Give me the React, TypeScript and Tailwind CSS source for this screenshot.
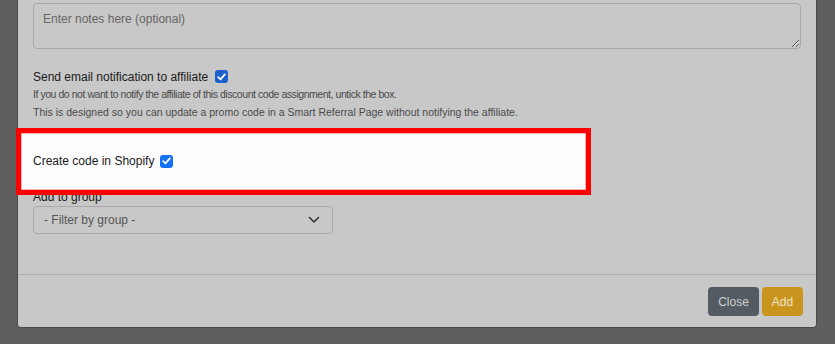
import React from "react";

const Check: React.FC<{ bright?: boolean }> = ({ bright }) => (
	<span
		className={
			"inline-flex items-center justify-center w-[13px] h-[13px] rounded-[3px] " +
			(bright ? "bg-[#1572f2]" : "bg-[#1d5fcb]")
		}
	>
		<svg width="9" height="8" viewBox="0 0 9 8" fill="none">
			<path d="M1.2 4.2 L3.5 6.4 L7.8 1.4" stroke="white" strokeWidth="1.7" strokeLinecap="round" strokeLinejoin="round" />
		</svg>
	</span>
);

const App: React.FC = () => {
	return (
		<div className="w-[835px] h-[344px] bg-[#5f5f5f] overflow-hidden font-['Liberation_Sans',Arial,sans-serif]">
			<div className="relative ml-[17px] w-[800px] bg-[#c8c8c8] border-x border-b border-[#4a4a4a] rounded-b-[4px]">
				<div className="px-[15px] pt-[3px] pb-[40px]">
					<textarea
						readOnly
						placeholder="Enter notes here (optional)"
						className="block w-[768px] h-[46px] px-[9px] py-[6px] bg-transparent border border-[#a9a9a9] rounded-[4px] text-[12px] leading-[18px] text-[#222] placeholder:text-[#666] outline-none"
					/>

					<div className="mt-[19px] flex items-center gap-[7px] h-[17px] text-[12px] text-[#1a1a1a]">
						<span>Send email notification to affiliate</span>
						<Check />
					</div>
					<p className="text-[10.5px] leading-[18px] tracking-[-0.45px] text-[#4a4a4a]">
						If you do not want to notify the affiliate of this discount code assignment, untick the box.
					</p>
					<p className="text-[10.5px] leading-[18px] text-[#4a4a4a]">
						This is designed so you can update a promo code in a Smart Referral Page without notifying the affiliate.
					</p>

					<div className="relative z-20 mt-[31px] flex items-center gap-[6px] h-[18px] text-[12px] text-[#1a1a1a]">
						<span>Create code in Shopify</span>
						<Check bright />
					</div>

					<div className="mt-[18px] h-[18px] text-[12px] leading-[18px] text-[#1a1a1a]">Add to group</div>
					<div className="flex items-center justify-between w-[300px] h-[28px] pl-[10px] pr-[12px] border border-[#a9a9a9] rounded-[4px] text-[12px] text-[#555]">
						<span>- Filter by group -</span>
						<svg width="12" height="8" viewBox="0 0 12 8" fill="none">
							<path d="M1.5 1.5 L6 6 L10.5 1.5" stroke="#333" strokeWidth="1.6" strokeLinecap="round" strokeLinejoin="round" />
						</svg>
					</div>
				</div>

				<div className="absolute z-10 left-[-2px] top-[128px] w-[575px] h-[67px] border-[5px] border-[#ff0000] bg-[#fdfdfd] shadow-[inset_0_0_0_1px_#ffb3b3]" />

				<div className="flex justify-end gap-[3px] border-t border-[#adadad] pt-[12px] pb-[11px] pr-[13px]">
					<button className="w-[51px] h-[29px] rounded-[4px] bg-[#545b62] text-[12px] text-[#cfcfcf]">Close</button>
					<button className="w-[41px] h-[29px] rounded-[4px] bg-[#c9951f] text-[12px] text-[#eee3c8]">Add</button>
				</div>
			</div>
		</div>
	);
};

export default App;
